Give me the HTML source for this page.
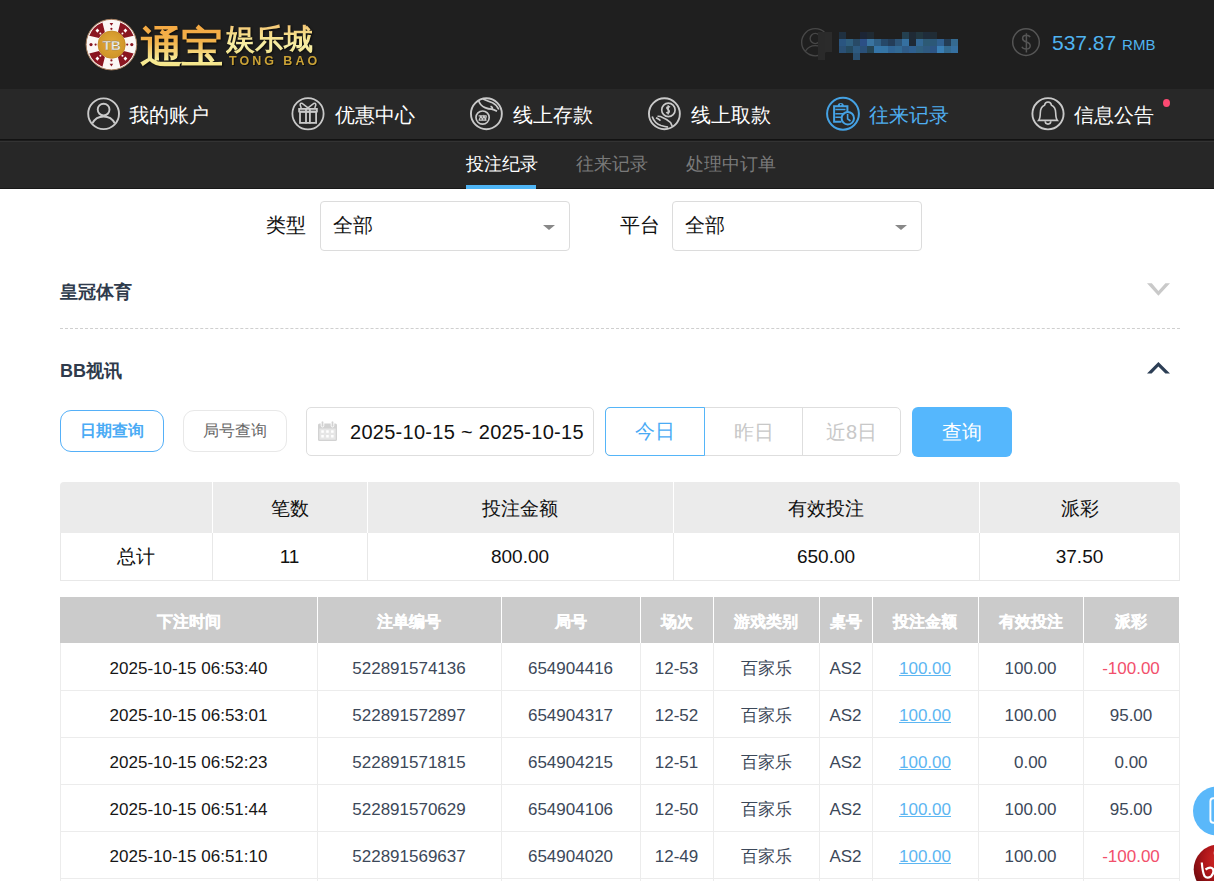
<!DOCTYPE html>
<html><head><meta charset="utf-8">
<style>
*{margin:0;padding:0;box-sizing:border-box}
html,body{width:1214px;height:881px;overflow:hidden;background:#fff;font-family:"Liberation Sans",sans-serif}
.abs{position:absolute}
.logoz{font-weight:bold;white-space:nowrap;filter:drop-shadow(1px 1px 1px rgba(0,0,0,.7));background:linear-gradient(180deg,#f5a640 0%,#f2b34c 40%,#f8eb98 75%,#f3e07a 100%);-webkit-background-clip:text;background-clip:text;color:transparent;text-shadow:none}
#top{position:absolute;left:0;top:0;width:1214px;height:89px;background:#1f1f1f}
#nav{position:absolute;left:0;top:89px;width:1214px;height:50px;background:#282828}
#navline{position:absolute;left:0;top:139px;width:1214px;height:3px;background:linear-gradient(#121212 0,#121212 1px,#1c1c1c 1px,#1c1c1c 2px,#333 2px)}
#sub{position:absolute;left:0;top:142px;width:1214px;height:47px;background:#272727;border-bottom:1px solid #181818}
.navt{position:absolute;top:102px;font-size:20px;line-height:26px;color:#fff;white-space:nowrap}
.subt{position:absolute;top:152px;font-size:17.5px;line-height:24px;color:#7a7a7a;white-space:nowrap}
.lbl{position:absolute;font-size:20px;line-height:26px;color:#111;margin-top:-1px}
.sel{position:absolute;height:50px;width:250px;border:1px solid #dcdcdc;border-radius:4px;background:#fff}
.sel span{position:absolute;left:12px;top:10px;font-size:20px;line-height:26px;color:#111}
.sel i{position:absolute;right:14px;top:23px;width:0;height:0;border-left:6px solid transparent;border-right:6px solid transparent;border-top:5px solid #888}
.sec{position:absolute;left:60px;font-size:18px;margin-top:1px;font-weight:bold;color:#2f3b4c;line-height:24px}
table{border-collapse:collapse;position:absolute;left:60px;table-layout:fixed}
#sum td{border:1px solid #e4e4e4;text-align:center;font-size:18px;color:#222;height:48px}
#sum tr.h td{background:#ececec;height:50px}
#det td{border:1px solid #e6e6e6;text-align:center;font-size:16px;color:#333;height:47px}
#det tr.h td{background:#c9c9c9;color:#fff;font-weight:bold;height:46px;border-color:#fff}
a.lk{color:#5db6f2;text-decoration:underline}
.neg{color:#f2506c}
.st{text-align:center;font-size:19px;line-height:24px;color:#111;white-space:nowrap}
.dh{text-align:center;font-size:16px;line-height:22px;color:#fff;font-weight:bold;white-space:nowrap;-webkit-text-stroke:0.3px #fff}
.dt{text-align:center;font-size:17px;line-height:24px;color:#3c4859;white-space:nowrap}
.d0{color:#161616}
.lk{color:#5db6f2;text-decoration:underline}
.dt.neg{color:#f2506c}
.seg{top:418px;width:100px;height:28px;font-size:20px;line-height:28px;color:#c8c8c8;text-align:center;white-space:nowrap}
</style></head><body>
<div id="top"></div>
<div id="nav"></div>
<div id="navline"></div>
<div id="sub"></div>



<!-- logo -->
<svg class="abs" style="left:84px;top:17px" width="56" height="56" viewBox="0 0 56 56">
<defs><radialGradient id="gg" cx="50%" cy="45%" r="55%"><stop offset="0" stop-color="#e2aa3a"/><stop offset="1" stop-color="#cf9428"/></radialGradient></defs>
<circle cx="27.4" cy="27.6" r="25.3" fill="#fbf7f5" stroke="#a88060" stroke-width="1"/>
<path fill="#8a1520" d="M5.24 18.65 A23.9 23.9 0 0 1 18.45 5.44 L20.88 15.21 A14.0 14.0 0 0 0 15.01 21.08Z M36.35 5.44 A23.9 23.9 0 0 1 49.56 18.65 L39.79 21.08 A14.0 14.0 0 0 0 33.92 15.21Z M49.56 36.55 A23.9 23.9 0 0 1 36.35 49.76 L33.92 39.99 A14.0 14.0 0 0 0 39.79 34.12Z M18.45 49.76 A23.9 23.9 0 0 1 5.24 36.55 L15.01 34.12 A14.0 14.0 0 0 0 20.88 39.99Z"/><path d="M13.40 11.50 L15.30 13.60 L13.40 15.70 L11.50 13.60Z" fill="#fff"/><circle cx="16.37" cy="16.57" r="1.0" fill="#fff"/><path d="M41.40 11.50 L43.30 13.60 L41.40 15.70 L39.50 13.60Z" fill="#fff"/><circle cx="38.43" cy="16.57" r="1.0" fill="#fff"/><path d="M41.40 39.50 L43.30 41.60 L41.40 43.70 L39.50 41.60Z" fill="#fff"/><circle cx="38.43" cy="38.63" r="1.0" fill="#fff"/><path d="M13.40 39.50 L15.30 41.60 L13.40 43.70 L11.50 41.60Z" fill="#fff"/><circle cx="16.37" cy="38.63" r="1.0" fill="#fff"/><path d="M25.60 6.00 L29.20 6.00 L27.40 8.80Z" fill="#8a1520"/><circle cx="27.40" cy="11.80" r="1.1" fill="#8a1520"/><circle cx="47.80" cy="27.60" r="1.6" fill="#8a1520"/><circle cx="43.20" cy="27.60" r="1.1" fill="#8a1520"/><path d="M25.60 46.80 L29.20 46.80 L27.40 49.60Z" fill="#8a1520"/><circle cx="27.40" cy="43.40" r="1.1" fill="#8a1520"/><circle cx="7.00" cy="27.60" r="1.6" fill="#8a1520"/><circle cx="11.60" cy="27.60" r="1.1" fill="#8a1520"/>
<circle cx="27.65" cy="27.65" r="13.6" fill="url(#gg)" stroke="#c48a26" stroke-width="0.9"/>
<text x="27.8" y="32.9" text-anchor="middle" font-family="Liberation Sans" font-weight="bold" font-size="13.5" fill="#f4f4f0" stroke="#8a7a60" stroke-width="0.35">TB</text>
</svg>
<div class="abs logoz" style="left:140px;top:22px;font-size:43px;line-height:50px;letter-spacing:-2px">通宝</div>
<div class="abs logoz" style="background-image:linear-gradient(180deg,#f4c070 0%,#f6e08c 40%,#f8f0a8 70%,#eedc80 100%);left:226px;top:22px;font-size:29px;line-height:34px;letter-spacing:0px">娱乐城</div>
<div class="abs" style="left:229px;top:54px;font-size:12.5px;line-height:14px;font-weight:bold;letter-spacing:3px;color:#caa236;white-space:nowrap;filter:drop-shadow(1px 1px 0 rgba(0,0,0,.6))">TONG BAO</div>
<svg class="abs" style="left:839px;top:31px" width="120" height="30" viewBox="839 31 120 30" shape-rendering="crispEdges">
<rect x="839.0" y="31.6" width="7" height="7" fill="#1f3040"/>
<rect x="860.0" y="31.6" width="7" height="7" fill="#1c2535"/>
<rect x="867.0" y="31.6" width="7" height="7" fill="#1f2a33"/>
<rect x="902.0" y="31.6" width="7" height="7" fill="#244050"/>
<rect x="909.0" y="31.6" width="7" height="7" fill="#1f2a35"/>
<rect x="916.0" y="31.6" width="7" height="7" fill="#22363f"/>
<rect x="923.0" y="31.6" width="7" height="7" fill="#1f2c3a"/>
<rect x="930.0" y="31.6" width="7" height="7" fill="#202c35"/>
<rect x="839.0" y="38.6" width="7" height="7" fill="#2a5580"/>
<rect x="846.0" y="38.6" width="7" height="7" fill="#2f5f7f"/>
<rect x="853.0" y="38.6" width="7" height="7" fill="#284a66"/>
<rect x="860.0" y="38.6" width="7" height="7" fill="#2c4f85"/>
<rect x="867.0" y="38.6" width="7" height="7" fill="#3a74a0"/>
<rect x="874.0" y="38.6" width="7" height="7" fill="#2f5f85"/>
<rect x="881.0" y="38.6" width="7" height="7" fill="#264868"/>
<rect x="888.0" y="38.6" width="7" height="7" fill="#243d58"/>
<rect x="895.0" y="38.6" width="7" height="7" fill="#2d5578"/>
<rect x="902.0" y="38.6" width="7" height="7" fill="#3570a0"/>
<rect x="909.0" y="38.6" width="7" height="7" fill="#1f2a35"/>
<rect x="916.0" y="38.6" width="7" height="7" fill="#336895"/>
<rect x="923.0" y="38.6" width="7" height="7" fill="#2d5a75"/>
<rect x="930.0" y="38.6" width="7" height="7" fill="#2c5878"/>
<rect x="937.0" y="38.6" width="7" height="7" fill="#306090"/>
<rect x="944.0" y="38.6" width="7" height="7" fill="#243d55"/>
<rect x="951.0" y="38.6" width="7" height="7" fill="#356a90"/>
<rect x="839.0" y="45.6" width="7" height="7" fill="#2a5075"/>
<rect x="846.0" y="45.6" width="7" height="7" fill="#254a60"/>
<rect x="853.0" y="45.6" width="7" height="7" fill="#2d5a80"/>
<rect x="860.0" y="45.6" width="7" height="7" fill="#2a5078"/>
<rect x="867.0" y="45.6" width="7" height="7" fill="#254555"/>
<rect x="874.0" y="45.6" width="7" height="7" fill="#3575a8"/>
<rect x="881.0" y="45.6" width="7" height="7" fill="#3575a5"/>
<rect x="888.0" y="45.6" width="7" height="7" fill="#306595"/>
<rect x="895.0" y="45.6" width="7" height="7" fill="#326a95"/>
<rect x="902.0" y="45.6" width="7" height="7" fill="#2f5c88"/>
<rect x="909.0" y="45.6" width="7" height="7" fill="#2f6090"/>
<rect x="916.0" y="45.6" width="7" height="7" fill="#306080"/>
<rect x="923.0" y="45.6" width="7" height="7" fill="#2f5a80"/>
<rect x="930.0" y="45.6" width="7" height="7" fill="#2d5585"/>
<rect x="937.0" y="45.6" width="7" height="7" fill="#3a7fb5"/>
<rect x="944.0" y="45.6" width="7" height="7" fill="#336a90"/>
<rect x="951.0" y="45.6" width="7" height="7" fill="#3670a0"/>
<rect x="853.0" y="52.6" width="7" height="7" fill="#2a5070"/>
</svg>
<!-- nav icons -->
<svg class="abs" style="left:82px;top:92px" width="44" height="44" viewBox="0 0 44 44" fill="none" stroke="#c9c9c9" stroke-width="1.9">
<circle cx="21.6" cy="21.75" r="15.4"/><circle cx="21.6" cy="17.6" r="5.9"/><path d="M10.4 31.3 A12.6 12.6 0 0 1 32.8 31.3"/></svg>
<svg class="abs" style="left:286px;top:92px" width="44" height="44" viewBox="0 0 44 44" fill="none" stroke="#c9c9c9" stroke-width="1.8">
<circle cx="22" cy="21.75" r="15.6"/><rect x="13.1" y="16.9" width="17.8" height="2.6"/><rect x="14" y="19.9" width="16.1" height="11"/>
<path d="M20 17v14.5M23.9 17v14.5"/><path d="M22 15.8 L16.5 11.6 Q14 10.6 14.2 13 L15.2 16M22 15.8 L27.5 11.6 Q30 10.6 29.8 13 L28.8 16" stroke-width="1.6"/></svg>
<svg class="abs" style="left:464px;top:92px" width="44" height="44" viewBox="0 0 44 44" fill="none" stroke="#c9c9c9" stroke-width="1.9">
<circle cx="22.4" cy="21.75" r="15.45"/><circle cx="18.6" cy="25.6" r="6.6" stroke-width="1.7"/>
<path d="M14.6 23.8h8M14.6 28.2h8M15.3 27.5l1.6-3.4 1.5 3.4 1.5-3.4 1.5 3.4 1-3.4" stroke-width="1.2"/>
<path d="M14.5 8.2 Q16 13.5 21 15.6 Q24.5 17 27.5 17.2 Q30 17.6 33 19.2M19 7 Q24 9.2 28.5 10.8 Q32.5 12.6 34.8 17.5M26.5 14.3 Q29 15.5 28.2 17.2" stroke-width="1.7"/></svg>
<svg class="abs" style="left:642px;top:92px" width="44" height="44" viewBox="0 0 44 44" fill="none" stroke="#c9c9c9" stroke-width="1.9">
<circle cx="22.4" cy="21.75" r="15.45"/><circle cx="26.4" cy="17.9" r="6.7" stroke-width="1.7"/>
<path d="M28 15.2 Q26.6 14 25.2 15 Q24.2 16.4 26 17.6 Q27.8 18.6 27 20.4 Q25.6 21.6 24.2 20.3M26.2 13.2v9.3" stroke-width="1.5"/>
<path d="M10.2 24.5 Q12.5 31.5 19 33.5 Q23 34.5 26 35.2M15.5 24.3 Q18 24 20.5 25.5 Q25.5 27.5 28.5 30.5 L30.2 34.2M14 25.8 Q16.5 27 18.5 28.6" stroke-width="1.7"/></svg>
<svg class="abs" style="left:820px;top:92px;filter:blur(0.3px)" width="44" height="44" viewBox="0 0 44 44" fill="none" stroke="#45a2e4" stroke-width="2">
<circle cx="23" cy="21.75" r="15.9"/><path d="M21.5 29.7H14.1V14.2H27.4v6.3"/><path d="M18.4 14 A2.35 2.35 0 0 1 23.1 14 Z" fill="#45a2e4" stroke-width="1.5"/><circle cx="20.75" cy="12.6" r="0.8" fill="#282828" stroke="none"/>
<path d="M15.3 17.5h10.2M15.3 21.7h9.3M15.3 25.3h5.8" stroke-width="1.6"/><circle cx="27.8" cy="26.2" r="6.2"/><path d="M27.6 22v4.8l2.9 2.2" stroke-width="1.6"/></svg>
<svg class="abs" style="left:1026px;top:92px" width="44" height="44" viewBox="0 0 44 44" fill="none" stroke="#c9c9c9" stroke-width="1.9">
<circle cx="22" cy="21.75" r="15.6"/><path d="M12.6 28.4 Q14.2 26.5 14.3 21 Q14.4 15 18.5 13.3 Q19 10 22 10 Q25 10 25.5 13.3 Q29.6 15 29.7 21 Q29.8 26.5 31.4 28.4 Z" stroke-width="1.6"/>
<path d="M19.2 29.3 A2.8 2.8 0 0 0 24.8 29.3" stroke-width="1.6"/></svg>

<!-- header user icon & blur -->
<svg class="abs" style="left:796px;top:22px" width="44" height="44" viewBox="0 0 44 44" fill="none" stroke="#474747" stroke-width="1.4">
<circle cx="19.25" cy="20.25" r="13.6"/><circle cx="19.25" cy="16.5" r="5.1"/><path d="M9.5 29 A11.5 11.5 0 0 1 29 29"/></svg>
<div class="abs" style="left:818px;top:32px;width:7px;height:28px;background:#2a2a2a"></div>
<div class="abs" style="left:825px;top:32px;width:7px;height:20px;background:#2b2b2b"></div>
<svg class="abs" style="left:1004px;top:22px" width="44" height="44" viewBox="0 0 44 44" fill="none" stroke="#555" stroke-width="1.5">
<circle cx="22" cy="20.1" r="13.3"/><path d="M26.2 15.2 Q25 13.2 22.3 13.3 Q18.6 13.5 18.6 16.4 Q18.7 18.9 22.3 20 Q26.3 21.2 26.2 24 Q26 27 22.2 27.1 Q19 27.1 17.9 24.8M22.4 11.2v19.3"/></svg>

<!-- nav texts -->
<div class="navt" style="left:129px">我的账户</div>
<div class="navt" style="left:335px">优惠中心</div>
<div class="navt" style="left:513px">线上存款</div>
<div class="navt" style="left:691px">线上取款</div>
<div class="navt" style="left:869px;color:#4faef0">往来记录</div>
<div class="navt" style="left:1074px">信息公告</div>
<div class="abs" style="left:1163px;top:99px;width:7px;height:8px;border-radius:50%;background:#fc4a72"></div>

<div class="subt" style="left:466px;color:#fff">投注纪录</div>
<div class="abs" style="left:466px;top:185px;width:70px;height:4px;background:#4fb5f5"></div>
<div class="subt" style="left:576px">往来记录</div>
<div class="subt" style="left:686px">处理中订单</div>

<!-- balance -->
<div class="abs" style="left:1052px;top:30px;font-size:21px;line-height:26px;color:#4fb3f0;white-space:nowrap">537.87 <span style="font-size:15px">RMB</span></div>

<!-- filters -->
<div class="lbl" style="left:266px;top:213px">类型</div>
<div class="sel" style="left:320px;top:201px"><span>全部</span><i></i></div>
<div class="lbl" style="left:620px;top:213px">平台</div>
<div class="sel" style="left:672px;top:201px"><span>全部</span><i></i></div>

<div class="sec" style="top:279px">皇冠体育</div>
<div class="abs" style="left:60px;top:328px;width:1120px;border-top:1px dashed #cfcfcf"></div>
<div class="sec" style="top:358px">BB视讯</div>

<!-- date row -->
<div class="abs" style="left:60px;top:410px;width:104px;height:42px;border:1px solid #55b0f8;border-radius:11px"></div>
<div class="abs" style="left:60px;top:420px;width:104px;font-size:16px;line-height:22px;font-weight:bold;color:#4aabf5;text-align:center;white-space:nowrap">日期查询</div>
<div class="abs" style="left:183px;top:410px;width:104px;height:42px;border:1px solid #e8e8e8;border-radius:11px"></div>
<div class="abs" style="left:183px;top:420px;width:104px;font-size:16px;line-height:22px;color:#666;text-align:center;white-space:nowrap">局号查询</div>
<div class="abs" style="left:306px;top:407px;width:288px;height:49px;border:1px solid #dedede;border-radius:5px"></div>
<svg class="abs" style="left:316px;top:420px" width="22" height="22" viewBox="0 0 22 22">
<rect x="2" y="3.5" width="19" height="17.5" rx="1.6" fill="#d2d2d2"/>
<rect x="5.2" y="1" width="2.6" height="6" rx="1.3" fill="#d2d2d2" stroke="#fff" stroke-width="0.9"/><rect x="15.2" y="1" width="2.6" height="6" rx="1.3" fill="#d2d2d2" stroke="#fff" stroke-width="0.9"/>
<rect x="3.3" y="8.5" width="16.4" height="11.2" fill="#e6e6e6"/>
<g fill="#fff"><rect x="5.3" y="10.3" width="2.5" height="2.5"/><rect x="10.2" y="10.3" width="2.5" height="2.5"/><rect x="15.1" y="10.3" width="2.5" height="2.5"/>
<rect x="5.3" y="15" width="2.5" height="2.5"/><rect x="10.2" y="15" width="2.5" height="2.5"/><rect x="15.1" y="15" width="2.5" height="2.5"/></g>
<g fill="#d2d2d2"><rect x="5.3" y="10.3" width="2.5" height="2.5" opacity="0"/></g>
</svg>
<div class="abs" style="left:350px;top:419px;font-size:20px;line-height:26px;color:#111;white-space:nowrap;letter-spacing:0.28px">2025-10-15 ~ 2025-10-15</div>
<div class="abs" style="left:605px;top:407px;width:296px;height:49px;border:1px solid #dedede;border-radius:5px"></div>
<div class="abs" style="left:802px;top:408px;width:1px;height:47px;background:#dedede"></div>
<div class="abs" style="left:605px;top:407px;width:100px;height:49px;border:1px solid #55b5f8;border-radius:5px 0 0 5px"></div>
<div class="abs seg" style="left:605px;top:417px;color:#4aabf5">今日</div>
<div class="abs seg" style="left:705px;width:97px">昨日</div>
<div class="abs seg" style="left:802px;width:99px">近8日</div>
<div class="abs" style="left:912px;top:407px;width:100px;height:50px;background:#55b7fd;border-radius:6px"></div>
<div class="abs seg" style="left:912px;top:418px;color:#fff">查询</div>
<!-- summary -->
<div class="abs" style="left:60px;top:482px;width:1120px;height:51px;background:#ebebeb;border-radius:4px 4px 0 0"></div>
<div class="abs" style="left:212px;top:482px;width:1px;height:51px;background:#fff"></div>
<div class="abs" style="left:367px;top:482px;width:1px;height:51px;background:#fff"></div>
<div class="abs" style="left:673px;top:482px;width:1px;height:51px;background:#fff"></div>
<div class="abs" style="left:979px;top:482px;width:1px;height:51px;background:#fff"></div>
<div class="abs" style="left:60px;top:533px;width:1120px;height:48px;border:1px solid #e8e8e8;border-top:0"></div>
<div class="abs" style="left:212px;top:533px;width:1px;height:47px;background:#e8e8e8"></div>
<div class="abs" style="left:367px;top:533px;width:1px;height:47px;background:#e8e8e8"></div>
<div class="abs" style="left:673px;top:533px;width:1px;height:47px;background:#e8e8e8"></div>
<div class="abs" style="left:979px;top:533px;width:1px;height:47px;background:#e8e8e8"></div>
<div class="abs st" style="left:60px;top:545px;width:152px">总计</div>
<div class="abs st" style="left:212px;top:497px;width:155px">笔数</div>
<div class="abs st" style="left:212px;top:545px;width:155px">11</div>
<div class="abs st" style="left:367px;top:497px;width:306px">投注金额</div>
<div class="abs st" style="left:367px;top:545px;width:306px">800.00</div>
<div class="abs st" style="left:673px;top:497px;width:306px">有效投注</div>
<div class="abs st" style="left:673px;top:545px;width:306px">650.00</div>
<div class="abs st" style="left:979px;top:497px;width:201px">派彩</div>
<div class="abs st" style="left:979px;top:545px;width:201px">37.50</div>
<div class="abs" style="left:60px;top:597px;width:1119px;height:46px;background:#cbcbcb"></div>
<div class="abs" style="left:317px;top:597px;width:1px;height:46px;background:#fff"></div>
<div class="abs" style="left:501px;top:597px;width:1px;height:46px;background:#fff"></div>
<div class="abs" style="left:640px;top:597px;width:1px;height:46px;background:#fff"></div>
<div class="abs" style="left:713px;top:597px;width:1px;height:46px;background:#fff"></div>
<div class="abs" style="left:819px;top:597px;width:1px;height:46px;background:#fff"></div>
<div class="abs" style="left:872px;top:597px;width:1px;height:46px;background:#fff"></div>
<div class="abs" style="left:978px;top:597px;width:1px;height:46px;background:#fff"></div>
<div class="abs" style="left:1083px;top:597px;width:1px;height:46px;background:#fff"></div>
<div class="abs" style="left:60px;top:643px;width:1px;height:238px;background:#ececec"></div>
<div class="abs" style="left:1179px;top:643px;width:1px;height:238px;background:#ececec"></div>
<div class="abs" style="left:317px;top:643px;width:1px;height:238px;background:#ececec"></div>
<div class="abs" style="left:501px;top:643px;width:1px;height:238px;background:#ececec"></div>
<div class="abs" style="left:640px;top:643px;width:1px;height:238px;background:#ececec"></div>
<div class="abs" style="left:713px;top:643px;width:1px;height:238px;background:#ececec"></div>
<div class="abs" style="left:819px;top:643px;width:1px;height:238px;background:#ececec"></div>
<div class="abs" style="left:872px;top:643px;width:1px;height:238px;background:#ececec"></div>
<div class="abs" style="left:978px;top:643px;width:1px;height:238px;background:#ececec"></div>
<div class="abs" style="left:1083px;top:643px;width:1px;height:238px;background:#ececec"></div>
<div class="abs" style="left:60px;top:690px;width:1120px;height:1px;background:#ececec"></div>
<div class="abs" style="left:60px;top:737px;width:1120px;height:1px;background:#ececec"></div>
<div class="abs" style="left:60px;top:784px;width:1120px;height:1px;background:#ececec"></div>
<div class="abs" style="left:60px;top:831px;width:1120px;height:1px;background:#ececec"></div>
<div class="abs" style="left:60px;top:878px;width:1120px;height:1px;background:#ececec"></div>
<div class="abs dh" style="left:60px;top:611px;width:257px">下注时间</div>
<div class="abs dh" style="left:317px;top:611px;width:184px">注单编号</div>
<div class="abs dh" style="left:501px;top:611px;width:139px">局号</div>
<div class="abs dh" style="left:640px;top:611px;width:73px">场次</div>
<div class="abs dh" style="left:713px;top:611px;width:106px">游戏类别</div>
<div class="abs dh" style="left:819px;top:611px;width:53px">桌号</div>
<div class="abs dh" style="left:872px;top:611px;width:106px">投注金额</div>
<div class="abs dh" style="left:978px;top:611px;width:105px">有效投注</div>
<div class="abs dh" style="left:1083px;top:611px;width:96px">派彩</div>
<div class="abs dt d0" style="left:60px;top:657px;width:257px">2025-10-15 06:53:40</div>
<div class="abs dt" style="left:317px;top:657px;width:184px">522891574136</div>
<div class="abs dt" style="left:501px;top:657px;width:139px">654904416</div>
<div class="abs dt" style="left:640px;top:657px;width:73px">12-53</div>
<div class="abs dt" style="left:713px;top:657px;width:106px">百家乐</div>
<div class="abs dt" style="left:819px;top:657px;width:53px">AS2</div>
<div class="abs dt" style="left:872px;top:657px;width:106px"><span class="lk">100.00</span></div>
<div class="abs dt" style="left:978px;top:657px;width:105px">100.00</div>
<div class="abs dt neg" style="left:1083px;top:657px;width:96px">-100.00</div>
<div class="abs dt d0" style="left:60px;top:704px;width:257px">2025-10-15 06:53:01</div>
<div class="abs dt" style="left:317px;top:704px;width:184px">522891572897</div>
<div class="abs dt" style="left:501px;top:704px;width:139px">654904317</div>
<div class="abs dt" style="left:640px;top:704px;width:73px">12-52</div>
<div class="abs dt" style="left:713px;top:704px;width:106px">百家乐</div>
<div class="abs dt" style="left:819px;top:704px;width:53px">AS2</div>
<div class="abs dt" style="left:872px;top:704px;width:106px"><span class="lk">100.00</span></div>
<div class="abs dt" style="left:978px;top:704px;width:105px">100.00</div>
<div class="abs dt" style="left:1083px;top:704px;width:96px">95.00</div>
<div class="abs dt d0" style="left:60px;top:751px;width:257px">2025-10-15 06:52:23</div>
<div class="abs dt" style="left:317px;top:751px;width:184px">522891571815</div>
<div class="abs dt" style="left:501px;top:751px;width:139px">654904215</div>
<div class="abs dt" style="left:640px;top:751px;width:73px">12-51</div>
<div class="abs dt" style="left:713px;top:751px;width:106px">百家乐</div>
<div class="abs dt" style="left:819px;top:751px;width:53px">AS2</div>
<div class="abs dt" style="left:872px;top:751px;width:106px"><span class="lk">100.00</span></div>
<div class="abs dt" style="left:978px;top:751px;width:105px">0.00</div>
<div class="abs dt" style="left:1083px;top:751px;width:96px">0.00</div>
<div class="abs dt d0" style="left:60px;top:798px;width:257px">2025-10-15 06:51:44</div>
<div class="abs dt" style="left:317px;top:798px;width:184px">522891570629</div>
<div class="abs dt" style="left:501px;top:798px;width:139px">654904106</div>
<div class="abs dt" style="left:640px;top:798px;width:73px">12-50</div>
<div class="abs dt" style="left:713px;top:798px;width:106px">百家乐</div>
<div class="abs dt" style="left:819px;top:798px;width:53px">AS2</div>
<div class="abs dt" style="left:872px;top:798px;width:106px"><span class="lk">100.00</span></div>
<div class="abs dt" style="left:978px;top:798px;width:105px">100.00</div>
<div class="abs dt" style="left:1083px;top:798px;width:96px">95.00</div>
<div class="abs dt d0" style="left:60px;top:845px;width:257px">2025-10-15 06:51:10</div>
<div class="abs dt" style="left:317px;top:845px;width:184px">522891569637</div>
<div class="abs dt" style="left:501px;top:845px;width:139px">654904020</div>
<div class="abs dt" style="left:640px;top:845px;width:73px">12-49</div>
<div class="abs dt" style="left:713px;top:845px;width:106px">百家乐</div>
<div class="abs dt" style="left:819px;top:845px;width:53px">AS2</div>
<div class="abs dt" style="left:872px;top:845px;width:106px"><span class="lk">100.00</span></div>
<div class="abs dt" style="left:978px;top:845px;width:105px">100.00</div>
<div class="abs dt neg" style="left:1083px;top:845px;width:96px">-100.00</div>
<div class="abs dt d0" style="left:60px;top:892px;width:257px">2025-10-15 06:50:31</div>
<div class="abs dt" style="left:317px;top:892px;width:184px">522891568412</div>
<div class="abs dt" style="left:501px;top:892px;width:139px">654903921</div>
<div class="abs dt" style="left:640px;top:892px;width:73px">12-48</div>
<div class="abs dt" style="left:713px;top:892px;width:106px">百家乐</div>
<div class="abs dt" style="left:819px;top:892px;width:53px">AS2</div>
<div class="abs dt" style="left:872px;top:892px;width:106px"><span class="lk">100.00</span></div>
<div class="abs dt" style="left:978px;top:892px;width:105px">100.00</div>
<div class="abs dt" style="left:1083px;top:892px;width:96px">95.00</div>
<!-- floating -->
<svg class="abs" style="left:1140px;top:276px" width="36" height="28" viewBox="1140 276 36 28"><path d="M1147 283.15H1151.8L1158.4 290.9L1165.4 283.15H1170L1158.4 295.7Z" fill="#c9c9c9"/></svg>
<svg class="abs" style="left:1140px;top:354px" width="36" height="28" viewBox="1140 354 36 28"><path d="M1147 373.5H1151.6L1158.4 366.5L1165.4 373.5H1170L1158.4 362.1Z" fill="#2c3e55"/></svg>
<svg class="abs" style="left:1190px;top:783px" width="24" height="98" viewBox="1190 783 24 98">
<defs><radialGradient id="rb" cx="60%" cy="30%" r="70%"><stop offset="0" stop-color="#e0302a"/><stop offset="0.55" stop-color="#b0161a"/><stop offset="1" stop-color="#6e0a0e"/></radialGradient></defs>
<circle cx="1217.6" cy="811" r="24.6" fill="#5ab8fa"/>
<rect x="1210.4" y="798.2" width="14" height="24.6" rx="3" fill="none" stroke="#fff" stroke-width="1.9"/>
<circle cx="1218.3" cy="869.3" r="24.6" fill="url(#rb)"/>
<ellipse cx="1222" cy="853" rx="9" ry="4.5" fill="#fff" opacity="0.25"/>
<path d="M1201.8 862.5 Q1202.5 872 1204.5 876 Q1207 879 1211 876.5 Q1214.5 873 1213 869 Q1210.5 866 1205.5 869.5" fill="none" stroke="#fff" stroke-width="2.2"/>
</svg>
</body></html>
